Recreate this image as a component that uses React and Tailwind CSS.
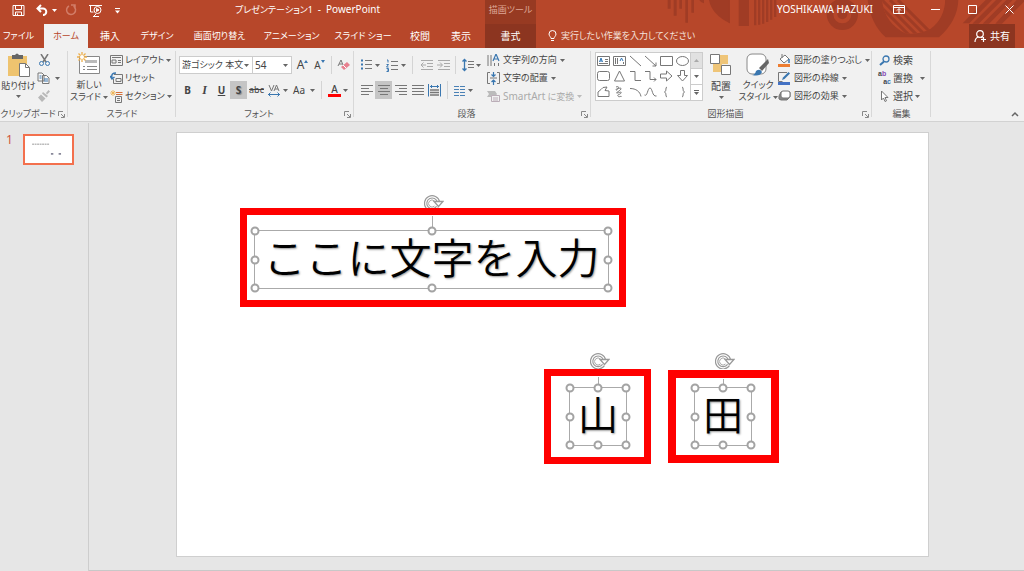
import React from "react";

const Caret = ({ className = "text-[#666]" }) => (
  <svg className={`h-[3px] w-[5px] shrink-0 ${className}`} viewBox="0 0 5 3" aria-hidden="true">
    <path d="M0 0h5L2.5 3z" fill="currentColor" />
  </svg>
);

const Icon = ({ w = 14, h = 14, children }) => (
  <svg width={w} height={h} viewBox={`0 0 ${w} ${h}`} fill="none" stroke="#777" strokeWidth="1" className="shrink-0" aria-hidden="true">
    {children}
  </svg>
);

const Launcher = ({ label }) => (
  <button aria-label={label} className="absolute bottom-[3px] right-[3px] h-[7px] w-[7px]">
    <svg viewBox="0 0 7 7" className="block h-[7px] w-[7px]" fill="none" stroke="#888">
      <path d="M.5 5V.5H5M3 3l3 3M6.500 3v3.500H3" />
    </svg>
  </button>
);

const Group = ({ label, className, launcher = true, children }) => (
  <section aria-label={label} className={`relative flex shrink-0 flex-col pt-[3px] ${className}`}>
    <div className="flex h-[57px]">{children}</div>
    <div className={`whitespace-nowrap text-center leading-3 text-[#555] ${launcher ? "pr-3" : ""}`}>{label}</div>
    {launcher && <Launcher label={`${label}のオプション`} />}
    <span className="absolute right-0 top-[3px] h-[66px] w-px bg-[#d8d8d8]" />
  </section>
);

const Cmd = ({ icon, children, caret = true, disabled, gap = "gap-[3px]", size = "" }) => (
  <button disabled={disabled} className={`flex h-[18px] items-center ${gap} ${size} ${disabled ? "text-[#aaa]" : "text-[#444]"}`}>
    <span className="flex w-[13px] shrink-0 justify-center">{icon}</span>
    <span>{children}</span>
    {caret && <Caret className={disabled ? "text-[#bbb]" : "text-[#666]"} />}
  </button>
);

const Btn = ({ label, w = "w-[17px]", active, children }) => (
  <button aria-label={label} aria-pressed={active} className={`flex h-[18px] shrink-0 items-center justify-center ${w} ${active ? "bg-[#c5c5c5]" : ""}`}>
    {children}
  </button>
);

const Sep = () => <span className="h-[18px] w-px shrink-0 bg-[#d4d4d4]" />;

const tabs = [
  ["ファイル", "w-[37px] mr-[7px]"],
  ["ホーム", "w-[44px]"],
  ["挿入", "w-[44px] text-[10px]"],
  ["デザイン", "w-[50px]"],
  ["画面切り替え", "w-[75px]"],
  ["アニメーション", "w-[69px]"],
  ["スライド ショー", "w-[74px]"],
  ["校閲", "w-[40px] text-[10px]"],
  ["表示", "w-[42px] mr-[3px] text-[10px]"],
];

function HeaderArt() {
  return (
    <svg className="absolute right-0 top-0 h-12 w-[384px]" viewBox="0 0 1152 144" fill="#a03c25" aria-hidden="true">
      <path d="M83 0h9v26h-9zM101 0h9v47h-9zM118 0h8v26h-8zM136 0h8v68h-8zM154 0h8v38h-8z" />
      <path d="M207 0h63v70Q216 45 207 0z" />
      <path d="M178 0h14v10Q182 8 178 0z" />
      <path d="M296 0h31v78h-31zM265 0h5v70l-5-3z" />
      <path d="M342 0h7v76h-7zM354 0h7v74h-7zM366 0h7v71h-7zM378 0h7v66h-7zM390 0h7v59h-7zM402 0h7v51h-7z" />
      <circle cx="607" cy="43" r="37" fill="none" stroke="#a03c25" strokeWidth="20" />
      <circle cx="607" cy="43" r="15" />
      <path d="M683 0h272q-2 62-58 112H737Q692 72 683 0z" />
      <clipPath id="dish"><path d="M726 0h190q-4 58-44 86-38 20-76 14-62-30-70-100z" /></clipPath>
      <g clipPath="url(#dish)">
        <path d="M680 0h260v120H680z" fill="#b7472a" />
        <path d="M690 0l110 110M714 0l110 110M738 0l110 110M762 0l110 110M786 0l110 110" transform="translate(-12 0)" stroke="#a03c25" strokeWidth="9" />
      </g>
      <path d="M1037 0h19L988 70h-20zM1068 0h19l-71 71h-19zM1099 0h19l-71 71h-19zM1130 0h22v5l-66 66h-20z" />
    </svg>
  );
}

function Header() {
  return (
    <header className="relative h-12 bg-[#b7472a] text-white">
      <HeaderArt />
      <div className="relative flex h-6">
        <div className="flex w-[235px] shrink-0 items-center pl-3">
          <button aria-label="上書き保存" className="mr-[11px]">
            <svg width="13" height="13" viewBox="0 0 13 13" fill="none" stroke="#fff" className="mt-[-4px]"><path d="M1 1.500h11v10H1zM3.500 1.500v4h6v-4M3.500 11.500V8h6v3.500M5.500 9.500v2" /></svg>
          </button>
          <button aria-label="元に戻す" className="mt-[-4px] flex items-center gap-1">
            <svg width="12" height="12" viewBox="0 0 12 12" fill="none" stroke="#fff" strokeWidth="2"><path d="M5 1 1.500 4.500 5 8M2 4.500h5a3.300 3.300 0 0 1 0 6.600" /></svg>
            <Caret className="text-white" />
          </button>
          <button aria-label="やり直し" className="ml-2 mt-[-4px]">
            <svg width="12" height="12" viewBox="0 0 12 12" fill="none" stroke="#d27d68" strokeWidth="1.500"><path d="M4 2a4.500 4.500 0 1 0 4.500.2M6 1h4v4" /></svg>
          </button>
          <button aria-label="先頭から開始" className="ml-3 mt-[-4px]">
            <svg width="14" height="13" viewBox="0 0 14 13" fill="none" stroke="#fff"><path d="M0 1.500h13M1.500 2v6h3M5 12l2-2M4 12.500h6" /><circle cx="8.500" cy="6" r="3.500" /><path d="m7.500 4.500 2.500 1.500-2.500 1.500z" fill="#fff" /></svg>
          </button>
          <button aria-label="クイック アクセス ツール バーのカスタマイズ" className="ml-3 mt-[-3px]">
            <svg width="5" height="6" viewBox="0 0 5 6" fill="#fff"><path d="M0 0h5v1H0zM0 2.500h5L2.500 5.500z" /></svg>
          </button>
        </div>
        <h1 className="w-[250px] shrink-0 leading-[18px]">プレゼンテーション1&nbsp; <span className="text-[10px]">-&nbsp; PowerPoint</span></h1>
        <div className="w-[51px] shrink-0 bg-[#973a22] text-center leading-5 text-[#dfa797]">描画ツール</div>
        <div className="ml-auto flex h-[18px] items-center">
          <span className="mr-5 whitespace-nowrap text-[10px]">YOSHIKAWA HAZUKI</span>
          <button aria-label="リボンの表示オプション" className="mr-[26px]">
            <svg width="12" height="9" viewBox="0 0 12 9" fill="none" stroke="#fff"><path d="M.5.5h11v8H.5zM.5 2.500h11M6 8V4M4 5.500l2-2 2 2" /></svg>
          </button>
          <button aria-label="最小化" className="mr-7"><svg width="9" height="9" viewBox="0 0 9 9" stroke="#fff"><path d="M0 4.500h9" /></svg></button>
          <button aria-label="最大化" className="mr-7"><svg width="9" height="9" viewBox="0 0 9 9" fill="none" stroke="#fff"><path d="M.5.5h8v8h-8z" /></svg></button>
          <button aria-label="閉じる" className="mr-[10px]"><svg width="9" height="9" viewBox="0 0 9 9" stroke="#fff"><path d="m.5.5 8 8m0-8-8 8" /></svg></button>
        </div>
      </div>
      <nav className="relative flex h-6 whitespace-nowrap">
        {tabs.map(([t, c]) => (
          <button key={t} className={`flex shrink-0 items-center justify-center ${c} ${t === "ホーム" ? "bg-[#f1f1f1] text-[#b7472a]" : ""}`}>{t}</button>
        ))}
        <button className="w-[51px] shrink-0 bg-[#8c3520] text-[10px]">書式</button>
        <button className="ml-[12px] flex items-center gap-1">
          <svg width="9" height="12" viewBox="0 0 9 12" fill="none" stroke="#fff"><path d="M3 8.500C3 7 1 6 1 4a3.500 3.500 0 0 1 7 0c0 2-2 3-2 4.500zM3 10.500h3" /></svg>
          <span className="text-[#f5e2dc]">実行したい作業を入力してください</span>
        </button>
        <button className="ml-auto mr-[9px] flex w-[46px] items-center justify-center gap-[3px] bg-[#8c3520] text-[10px]">
          <svg width="13" height="13" viewBox="0 0 13 13" fill="none" stroke="#fff" strokeWidth="1.200"><circle cx="6" cy="4" r="3.300" /><path d="M1 12c0-3 1.500-4.500 3.500-5M7 7l1.500 1M9.500 7v5M7 9.500h5" /></svg>
          共有
        </button>
      </nav>
    </header>
  );
}

const shapes = [
  <><path d="M.5 1.500h12v9H.5zM8 4.500h3M8 6.500h3M2 8.500h9" /><path d="m2.500 7 1.500-4 1.500 4M3 6h2" stroke="#2f75b5" /></>,
  <><path d="M.5 1.500h12v9H.5zM2.500 3v6M4.500 3v6M10.500 7v2" /><path d="m7 6 1.500-3L10 6" stroke="#2f75b5" /></>,
  <path d="m1 1 11 10" />,
  <path d="m1 1 11 10M8.500 11H12V7.500" />,
  <path d="M.5 1.500h12v9H.5z" />,
  <ellipse cx="6.500" cy="6" rx="6" ry="4.500" />,
  <rect x=".5" y="1.500" width="12" height="9" rx="2" />,
  <path d="M6.500 1 1.500 11h10z" />,
  <path d="M1 1.500h5v9h6" />,
  <path d="M1 1.500h5v8h6M10 7.500l2 2-2 2" />,
  <path d="M.5 4h6V1l5.500 5-5.500 5V8h-6z" />,
  <path d="M4.500.5v5h-3L6.500 11l5-5.500h-3v-5z" />,
  <path d="M1 10.500V6l3-2.500L6 1.500l4-.5-2 3.500 4 .5v5.500z" />,
  <path d="M3 1c5-2 1 4 0 3s6-3 5-1-6 4-4 4 5-2 4 0-4 1-3 3 4-1 3 1" />,
  <path d="M1 2.500c6 0 10 3 11 8" />,
  <path d="M.5 9c3 2 3-7 5.500-7s2 9 6.500 8" />,
  <path d="M7 1C5 1 7 5 4.500 6 7 7 5 11 7 11" />,
  <path d="M6 1c2 0 0 4 2.500 5C6 7 8 11 6 11" />,
];

const Lines = ({ rows }) => (
  <Icon w={12} h={12}>{rows.map(([a, b], i) => <path key={i} d={`M${a} ${i * 3 + 1.5}H${b}`} />)}</Icon>
);

function ClipboardGroup() {
  return (
    <Group label="クリップボード" className="w-[68px]">
      <button className="flex w-[37px] shrink-0 flex-col items-center whitespace-nowrap text-[#444]">
        <svg width="24" height="25" viewBox="0 0 24 25" className="mt-[2px]">
          <path d="M1 3h19v20H1z" fill="#eec36f" /><path d="M5 2h3q2-3 4 0h4v4H5z" fill="#666" />
          <path d="M12.500 10.500h6l4 4v9h-10z" fill="#fff" stroke="#777" /><path d="M18.500 10.500v4h4" fill="none" stroke="#777" />
        </svg>
        <span className="mt-[2px] leading-3">貼り付け</span>
        <span className="mt-[3px]"><Caret /></span>
      </button>
      <div className="flex flex-col">
        <button aria-label="切り取り" className="h-[18px] pl-[2px]"><Icon w={11} h={12}><path d="m2 0 5 8M9 0 4 8" strokeWidth="1.500" /><circle cx="2.500" cy="9.500" r="2" stroke="#3a77b0" /><circle cx="8.500" cy="9.500" r="2" stroke="#3a77b0" /></Icon></button>
        <button aria-label="コピー" className="flex h-[18px] items-center gap-[5px]"><Icon w={13} h={12}><path d="M1 1h4l2 2v6H1zM5.500 3.500h4l2.500 2.500v5.500H5.500z" fill="#f8f8f8" /><path d="M7 7h4M7 9h4M2.500 4h2M2.500 6h2" stroke="#3a77b0" /></Icon><Caret /></button>
        <button aria-label="書式のコピー/貼り付け" className="h-[18px]"><Icon w={13} h={12}><path d="m9 3 2.500-3L13 1.500 10 4.500zM6 2l5 4-1.500 1.500L5 3.500zM4 4.500l4.500 4L5 12 1 7.500z" fill="#b8b8b8" stroke="none" /></Icon></button>
      </div>
    </Group>
  );
}

function SlidesGroup() {
  return (
    <Group label="スライド" className="w-[108px]" launcher={false}>
      <button className="flex w-[42px] shrink-0 flex-col items-center text-[#444]">
        <svg width="24" height="23" viewBox="0 0 24 23" className="mt-[1px]" fill="none" stroke="#888">
          <path d="M2.500 4.500h20v17h-20z" fill="#fff" /><path d="M8 9.500h12" stroke="#bbb" strokeWidth="3" /><path d="M6 14.500h2M10 14.500h10M6 17.500h2M10 17.500h10" />
          <path d="M5 0v10M0 5h10M1.500 1.500l7 7m0-7-7 7" stroke="#eeb04c" strokeWidth="1.300" /><circle cx="5" cy="5" r="2" fill="#fff" stroke="none" />
        </svg>
        <span className="mt-[4px] leading-3">新しい</span>
        <span className="flex items-center gap-[2px] whitespace-nowrap leading-3">スライド<Caret /></span>
      </button>
      <div className="whitespace-nowrap">
        <Cmd gap="gap-[2px]" icon={<Icon w={13} h={11}><path d="M.5.5h12v10H.5zM2 2.500h9M2 5h4v3H2zM8 5.500h3M8 7.500h3" /></Icon>}>レイアウト</Cmd>
        <Cmd gap="gap-[2px]" caret={false} icon={<Icon w={13} h={12}><path d="M4 2.500h8.500v9h-9V7M6 6.500h5v3H6z" /><path d="M6 1C3 1 1 2 2 6M0 4l2 3 2.500-2" stroke="#3a77b0" strokeWidth="1.500" /></Icon>}>リセット</Cmd>
        <Cmd gap="gap-[2px]" icon={<Icon w={13} h={13}><path d="M5.500 6.500h6v6h-6zM7 8.500h3M7 10.500h3" /><path d="M6 2.500h6.500M6 4.500h6.500" stroke="#d67038" /><path d="M3 0v6M0 3h6M1 1l4 4m0-4L1 5" stroke="#eeb04c" strokeWidth=".8" /></Icon>}>セクション</Cmd>
      </div>
    </Group>
  );
}

function FontGroup() {
  return (
    <Group label="フォント" className="w-[178px]">
      <div className="pl-[3px] pt-[5px] text-[#444]">
        <div className="flex h-[18px] items-center">
          <label className="relative flex h-[18px] w-[74px] items-center border border-[#ccc] bg-white">
            <select aria-label="フォント" className="h-full w-full appearance-none whitespace-nowrap pl-[2px] text-[9px] outline-none"><option>游ゴシック 本文</option></select>
            <span className="pointer-events-none absolute right-[3px] flex"><Caret /></span>
          </label>
          <label className="relative flex h-[18px] w-[39px] items-center border border-l-0 border-[#ccc] bg-white">
            <select aria-label="フォント サイズ" className="h-full w-full appearance-none pl-[2px] text-[10px] outline-none"><option>54</option></select>
            <span className="pointer-events-none absolute right-[3px] flex"><Caret /></span>
          </label>
          <span className="w-[2px]" />
          <Btn label="フォント サイズの拡大"><span className="text-[12px]">A</span><span className="mb-2"><svg width="4" height="3"><path d="M0 3h4L2 0z" fill="#3a77b0" /></svg></span></Btn>
          <Btn label="フォント サイズの縮小"><span className="text-[10px]">A</span><span className="mb-2"><svg width="4" height="3"><path d="M0 0h4L2 3z" fill="#3a77b0" /></svg></span></Btn>
          <span className="w-[3px]" /><Sep /><span className="w-[3px]" />
          <Btn label="すべての書式をクリア"><Icon w={13} h={12}><path d="m1 7 3-6 2 5M2 5h3" /><path d="m4 8 6-5 3 3-6 5z" fill="#e8808f" stroke="none" /><path d="m6 6 3 3" stroke="#fff" /></Icon></Btn>
        </div>
        <div className="mt-[7px] flex h-[18px] items-center text-[10px]">
          <Btn label="太字"><b>B</b></Btn>
          <Btn label="斜体"><i className="font-['Liberation_Serif'] text-[12px] font-bold">I</i></Btn>
          <Btn label="下線"><b className="underline">U</b></Btn>
          <Btn label="文字の影" active><b className="[text-shadow:1px_1px_1px_#888]">S</b></Btn>
          <Btn label="取り消し線" w="w-[19px]"><s className="text-[9px]">abc</s></Btn>
          <Btn label="文字の間隔"><Icon w={13} h={13}><path d="m1 1 2.500 6L6 1M6 7l2.500-6L11 7M7 5h3" /><path d="M0 10.500h12M2.500 8.500l-2 2 2 2M9.500 8.500l2 2-2 2" stroke="#3a77b0" /></Icon></Btn>
          <Caret />
          <Btn label="文字種の変換" w="w-[22px]">Aa</Btn>
          <Caret />
          <span className="w-[6px]" /><Sep /><span className="w-[4px]" />
          <Btn label="フォントの色"><span className="border-b-[3px] border-[#f00] px-[3px] font-medium leading-[10px]">A</span></Btn>
          <Caret />
        </div>
      </div>
    </Group>
  );
}

function ParagraphGroup() {
  return (
    <Group label="段落" className="w-[237px]">
      <div className="w-[133px] shrink-0 pl-[4px] pt-[5px]">
        <div className="flex h-[18px] items-center">
          <Btn label="箇条書き"><Icon w={12} h={12}><path d="M4 1.500h7M4 5.500h7M4 9.500h7" /><path d="M0 1.500h2M0 5.500h2M0 9.500h2" stroke="#3a77b0" strokeWidth="2" /></Icon></Btn>
          <Caret /><span className="w-[4px]" />
          <Btn label="段落番号"><Icon w={13} h={13}><path d="M5 2.500h7M5 6.500h7M5 10.500h7" /><path d="M1 1h1v2.500M.5 5.500h2l-2 2.500h2M.5 9.500h2V11H1m1.500 0v1.500h-2" stroke="#3a77b0" /></Icon></Btn>
          <Caret /><span className="w-[6px]" /><Sep /><span className="w-[5px]" />
          <Btn label="インデントを減らす"><Icon w={13} h={12}><path d="M1 1.500h12M7 4.500h6M7 7.500h6M1 10.500h12M6 6H1m2.500-2.500L1 6l2.500 2.500" stroke="#aaa" /></Icon></Btn>
          <Btn label="インデントを増やす"><Icon w={13} h={12}><path d="M1 1.500h12M7 4.500h6M7 7.500h6M1 10.500h12M0 6h5M3 3.500 5.500 6 3 8.500" stroke="#aaa" /></Icon></Btn>
          <span className="w-[3px]" /><Sep /><span className="w-[3px]" />
          <Btn label="行間"><Icon w={12} h={14}><path d="M6 3.500h6M6 6.500h6M6 9.500h6" /><path d="M2.500 1v12M.5 3.500l2-2 2 2M.5 10.500l2 2 2-2" stroke="#3a77b0" strokeWidth="1.300" /></Icon></Btn>
          <Caret />
        </div>
        <div className="mt-[7px] flex h-[18px] items-center">
          <Btn label="左揃え"><Lines rows={[[0, 12], [0, 8], [0, 12], [0, 8]]} /></Btn>
          <Btn label="中央揃え" active><Lines rows={[[0, 12], [2, 10], [0, 12], [2, 10]]} /></Btn>
          <Btn label="右揃え"><Lines rows={[[0, 12], [4, 12], [0, 12], [4, 12]]} /></Btn>
          <Btn label="両端揃え"><Lines rows={[[0, 12], [0, 12], [0, 12], [0, 12]]} /></Btn>
          <Btn label="均等割り付け"><Icon w={13} h={13}><path d="M2 6h9M2 8.500h9M2 11h9" strokeWidth="1.500" /><path d="M.5 0v12.500M12.500 0v12.500M2 2.500h9M4 1 2.500 2.500 4 4M9 1l1.500 1.500L9 4" stroke="#3a77b0" /></Icon></Btn>
          <span className="w-[4px]" /><Sep /><span className="w-[3px]" />
          <Btn label="段の追加または削除"><Icon w={11} h={11}><path d="M0 1.500h5M0 4.500h5M0 7.500h5M0 10.500h5M6 1.500h5M6 4.500h5M6 7.500h5M6 10.500h5" stroke="#4a81b5" /></Icon></Btn>
          <Caret />
        </div>
      </div>
      <div className="whitespace-nowrap">
        <Cmd icon={<Icon w={13} h={13}><path d="M1 1v11M4 1v11M7.500 9v3M11.500 9v3" /><path d="m6 7 3-7 3 7M7 5h4" stroke="#3a77b0" strokeWidth="1.200" /></Icon>}>文字列の方向</Cmd>
        <Cmd icon={<Icon w={13} h={13}><path d="M3 .5H.5v11H3M10 .5h2.500v11H10M3 6h7" /><path d="M6.500 0v4M4.500 2.500l2 2 2-2M6.500 13V8M4.500 10l2-2 2 2" stroke="#3a77b0" strokeWidth="1.200" /></Icon>}>文字の配置</Cmd>
        <Cmd disabled icon={<Icon w={13} h={12}><path d="M0 1h8l2 3-2 3H0l2-3z" fill="#bbb" stroke="none" /><path d="M4.500 5.500h8v6h-8zM6 8h5M6 10h5" fill="#f1f1f1" stroke="#bbaeb8" /></Icon>}><span className="text-[10px]">SmartArt</span> に変換</Cmd>
      </div>
    </Group>
  );
}

function DrawingGroup() {
  return (
    <Group label="図形描画" className="w-[281px]">
      <div className="ml-[4px] mt-px flex h-[49px] w-[108px] shrink-0 border border-[#ccc] bg-white">
        <div className="grid flex-1 grid-cols-6 place-items-center">
          {shapes.map((s, i) => <button key={i} aria-label={`図形 ${i + 1}`}><Icon w={13} h={12}>{s}</Icon></button>)}
        </div>
        <div className="flex w-[12px] flex-col divide-y divide-[#ccc] border-l border-[#ccc]">
          <button aria-label="前の行" className="flex flex-1 items-center justify-center bg-[#e1e1e1]"><svg width="5" height="3"><path d="M0 3h5L2.500 0z" fill="#aaa" /></svg></button>
          <button aria-label="次の行" className="flex flex-1 items-center justify-center"><Caret /></button>
          <button aria-label="その他" className="flex flex-1 flex-col items-center justify-center gap-px"><span className="h-px w-[5px] bg-[#666]" /><Caret /></button>
        </div>
      </div>
      <button className="flex w-[36px] shrink-0 flex-col items-center text-[#444]">
        <svg width="24" height="23" viewBox="0 0 24 23" className="mt-[2px]"><path d="M10 2h9v9h-9zM4 10h9v9H4z" fill="#efc578" /><path d="M1.500 1.500h9v9h-9zM12.500 12.500h9v9h-9z" fill="#fff" stroke="#777" /></svg>
        <span className="mt-[4px] text-[10px] leading-3">配置</span>
        <span className="mt-[4px]"><Caret /></span>
      </button>
      <button className="flex w-[38px] shrink-0 flex-col items-center text-[#444]">
        <svg width="24" height="25" viewBox="0 0 24 25" className="mt-[1px]"><rect x="1" y="2" width="19" height="20" rx="5" fill="#fff" stroke="#888" /><path d="m13 16 9-9 1 4-7 8z" fill="#666" /><path d="M6 23q3 0 4-4 4-3 6 1-2 5-10 3z" fill="#3a77b0" /></svg>
        <span className="mt-[2px] whitespace-nowrap leading-3">クイック</span>
        <span className="flex items-center gap-[2px] whitespace-nowrap leading-3">スタイル<Caret /></span>
      </button>
      <div className="whitespace-nowrap pl-px">
        <Cmd icon={<Icon w={13} h={13}><path d="M0 11.500h12" stroke="#ed7d31" strokeWidth="3" /><path d="m2 5 5-4 4 4-5 4zM4 4V0" fill="#fff" /><path d="M11 5v4" strokeWidth="1.500" stroke="#3a77b0" /></Icon>}>図形の塗りつぶし</Cmd>
        <Cmd icon={<Icon w={13} h={13}><path d="M0 11.500h12" stroke="#4472c4" strokeWidth="3" /><path d="M9 .5H.5v9h4" /><path d="m4 8 1-2.500L10.500 0 12 1.500 6.500 7z" fill="#3a77b0" stroke="none" /></Icon>}>図形の枠線</Cmd>
        <Cmd icon={<Icon w={13} h={12}><path d="M3 10Q0 10 1 6l2-4h9v5l-3 3z" fill="#888" /><rect x="3" y="1" width="9" height="7" rx="2" fill="#fff" /></Icon>}>図形の効果</Cmd>
      </div>
    </Group>
  );
}

function EditGroup() {
  return (
    <Group label="編集" className="w-[59px]" launcher={false}>
      <div className="whitespace-nowrap pl-[6px]">
        <Cmd size="text-[10px]" gap="gap-[2px]" caret={false} icon={<Icon w={11} h={11}><circle cx="7" cy="4" r="3" stroke="#3a77b0" strokeWidth="1.300" /><path d="M5 6.500 1 10" stroke="#3a77b0" strokeWidth="2" /></Icon>}>検索</Cmd>
        <button className="flex h-[18px] items-center gap-[2px] text-[10px] text-[#444]">
          <span className="flex w-[13px] flex-col font-['Liberation_Sans'] text-[7px] font-bold leading-[8px]">
            <span className="text-left">a<span className="text-[#8a4db5]">b</span></span>
            <span className="text-right">a<span className="text-[#3a77b0]">c</span></span>
          </span>
          置換<span className="ml-[5px]"><Caret /></span>
        </button>
        <Cmd size="text-[10px]" gap="gap-[2px]" icon={<Icon w={9} h={12}><path d="M1.500 1v9l2-2 1.500 3.500 1.500-.7L5 7.500h3z" fill="#fff" /></Icon>}>選択</Cmd>
      </div>
    </Group>
  );
}

const handleSpots = [
  "left-0 top-0", "left-1/2 top-0", "left-full top-0",
  "left-0 top-1/2", "left-full top-1/2",
  "left-0 top-full", "left-1/2 top-full", "left-full top-full",
];

function Rotator({ className }) {
  return (
    <svg className={`absolute h-4 w-5 ${className}`} viewBox="0 0 20 16" fill="none" aria-hidden="true">
      <path d="M13.500 12A6.500 6.500 0 1 1 14.500 7" stroke="#999" strokeWidth="3.500" />
      <path d="M13.500 12A6.500 6.500 0 1 1 14.500 7" stroke="#fff" strokeWidth="1.200" />
      <path d="M10 6.500h9l-4.500 5z" fill="#fff" stroke="#999" strokeWidth="1.300" />
      <path d="M10.500 11a3.500 3.500 0 1 1 0-5" stroke="#aaa" />
    </svg>
  );
}

function TextShape({ frame, box, rotator, stem, size, children }) {
  return (
    <>
      <Rotator className={rotator} />
      <div className={`absolute border-[#f00] ${frame}`} />
      <div className={`absolute border border-[#aaa] ${box}`}>
        <span className={`absolute bottom-full left-1/2 w-px bg-[#aaa] ${stem}`} />
        <p className={`flex h-full items-center justify-center whitespace-nowrap pb-2 font-['Noto_Sans_CJK_JP'] font-[350] leading-none text-black [font-feature-settings:normal] [text-shadow:1px_1px_2px_#999] ${size}`}>{children}</p>
        {handleSpots.map((p) => (
          <span key={p} className={`absolute h-[9px] w-[9px] -translate-x-1/2 -translate-y-1/2 rounded-full border-2 border-[#a3a3a3] bg-white ${p}`} />
        ))}
      </div>
    </>
  );
}

export default function App() {
  return (
    <div lang="ja" className="flex min-h-screen flex-col bg-[#e6e6e6] font-['Noto_Sans','Noto_Sans_CJK_JP',sans-serif] text-[9px] [font-feature-settings:'palt']">
      <Header />
      <div className="relative flex h-[74px] border-b border-[#d2d2d2] bg-[#f1f1f1]">
        <ClipboardGroup />
        <SlidesGroup />
        <FontGroup />
        <ParagraphGroup />
        <DrawingGroup />
        <EditGroup />
        <button aria-label="リボンを折りたたむ" className="mb-1 ml-auto mr-[5px] self-end">
          <svg width="8" height="6" viewBox="0 0 8 6" fill="none" stroke="#666" strokeWidth="1.500"><path d="m1 5 3-3 3 3" /></svg>
        </button>
      </div>
      <div className="flex flex-1 pt-px">
        <aside className="flex w-[89px] shrink-0 items-start border-r border-[#cdcdcd] pl-[6px] pt-[11px]">
          <span className="w-[17px] text-[12px] leading-3 text-[#d0573c]">1</span>
          <button aria-label="スライド 1" className="h-[31px] w-[51px] border-2 border-[#f3704d] bg-white">
            <svg viewBox="0 0 48 28" className="h-full w-full" stroke="#bbb" aria-hidden="true"><path d="M7 8.500h18" strokeDasharray="2 .6" strokeWidth="1.500" /><path d="M26.500 18.500h2.500M34.500 18.500H37" strokeWidth="2" stroke="#889" /></svg>
          </button>
        </aside>
        <main className="flex-1 border-b border-[#c8c8c8] pb-[13px] pl-[87px] pr-[95px] pt-[9px]">
          <div className="relative h-full min-h-[424px] border border-[#cfcfcf] bg-white">
            <TextShape size="text-[42px]" frame="left-[63px] top-[75px] h-[99px] w-[386px] border-[7px]" box="left-[77px] top-[97px] h-[59px] w-[355px]" rotator="left-[247px] top-[62px]" stem="h-[15px]">ここに文字を入力</TextShape>
            <TextShape size="text-[40px]" frame="left-[367px] top-[236px] h-[95px] w-[107px] border-[7px]" box="left-[392px] top-[254px] h-[59px] w-[58px]" rotator="left-[413px] top-[220px]" stem="h-[11px]">山</TextShape>
            <TextShape size="text-[40px]" frame="left-[491px] top-[237px] h-[93px] w-[111px] border-[8px]" box="left-[517px] top-[254px] h-[59px] w-[58px]" rotator="left-[538px] top-[220px]" stem="h-[9px]">田</TextShape>
          </div>
        </main>
      </div>
    </div>
  );
}
